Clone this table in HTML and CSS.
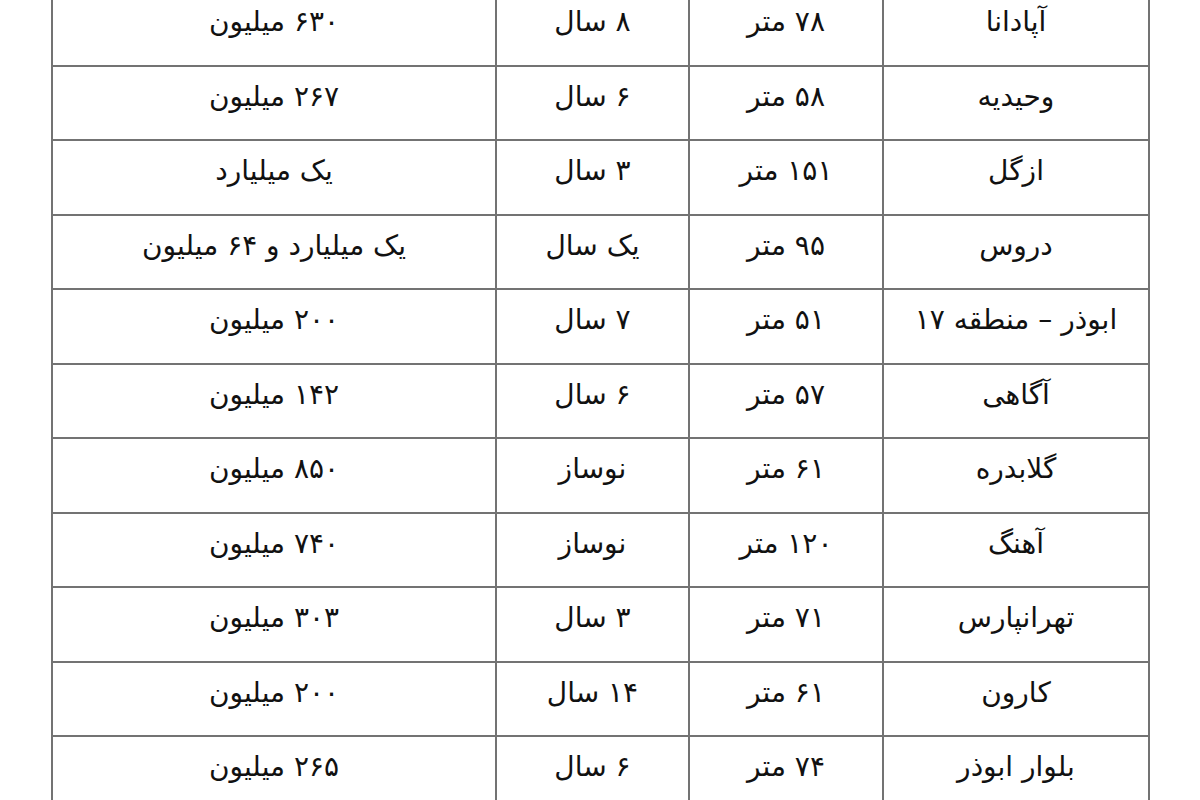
FILE: index.html
```html
<!DOCTYPE html>
<html lang="fa" dir="rtl">
<head>
<meta charset="utf-8">
<link rel="stylesheet" href="styles.css">
</head>
<body>
<div class="page">
<table class="prices">
<tbody>
<tr><td class="c-area">آپادانا</td><td class="c-size">۷۸ متر</td><td class="c-age">۸ سال</td><td class="c-price">۶۳۰ میلیون</td></tr>
<tr><td class="c-area">وحیدیه</td><td class="c-size">۵۸ متر</td><td class="c-age">۶ سال</td><td class="c-price">۲۶۷ میلیون</td></tr>
<tr><td class="c-area">ازگل</td><td class="c-size">۱۵۱ متر</td><td class="c-age">۳ سال</td><td class="c-price">یک میلیارد</td></tr>
<tr><td class="c-area">دروس</td><td class="c-size">۹۵ متر</td><td class="c-age">یک سال</td><td class="c-price">یک میلیارد و ۶۴ میلیون</td></tr>
<tr><td class="c-area">ابوذر – منطقه ۱۷</td><td class="c-size">۵۱ متر</td><td class="c-age">۷ سال</td><td class="c-price">۲۰۰ میلیون</td></tr>
<tr><td class="c-area">آگاهی</td><td class="c-size">۵۷ متر</td><td class="c-age">۶ سال</td><td class="c-price">۱۴۲ میلیون</td></tr>
<tr><td class="c-area">گلابدره</td><td class="c-size">۶۱ متر</td><td class="c-age">نوساز</td><td class="c-price">۸۵۰ میلیون</td></tr>
<tr><td class="c-area">آهنگ</td><td class="c-size">۱۲۰ متر</td><td class="c-age">نوساز</td><td class="c-price">۷۴۰ میلیون</td></tr>
<tr><td class="c-area">تهرانپارس</td><td class="c-size">۷۱ متر</td><td class="c-age">۳ سال</td><td class="c-price">۳۰۳ میلیون</td></tr>
<tr><td class="c-area">کارون</td><td class="c-size">۶۱ متر</td><td class="c-age">۱۴ سال</td><td class="c-price">۲۰۰ میلیون</td></tr>
<tr><td class="c-area">بلوار ابوذر</td><td class="c-size">۷۴ متر</td><td class="c-age">۶ سال</td><td class="c-price">۲۶۵ میلیون</td></tr>
</tbody>
</table>
</div>
</body>
</html>
```

FILE: styles.css
```css
html, body {
  margin: 0;
  padding: 0;
  background: #ffffff;
  overflow: hidden;
}
.page {
  padding: 0 50px 0 53px;
  margin-top: -10px;
}
.prices {
  width: 1097px;
  border-collapse: collapse;
  table-layout: fixed;
  direction: rtl;
  font-family: "DejaVu Sans", "Noto Sans", sans-serif;
  font-size: 28px;
  color: #111111;
}
.prices td {
  border: 2px solid #737373;
  height: 74.5px;
  box-sizing: border-box;
  padding: 0 8px 12px 8px;
  text-align: center;
  vertical-align: middle;
  line-height: 1.2;
}
.c-area { width: 266px; }
.c-size { width: 194px; }
.c-age { width: 193px; }
.c-price { width: 444px; }
```
